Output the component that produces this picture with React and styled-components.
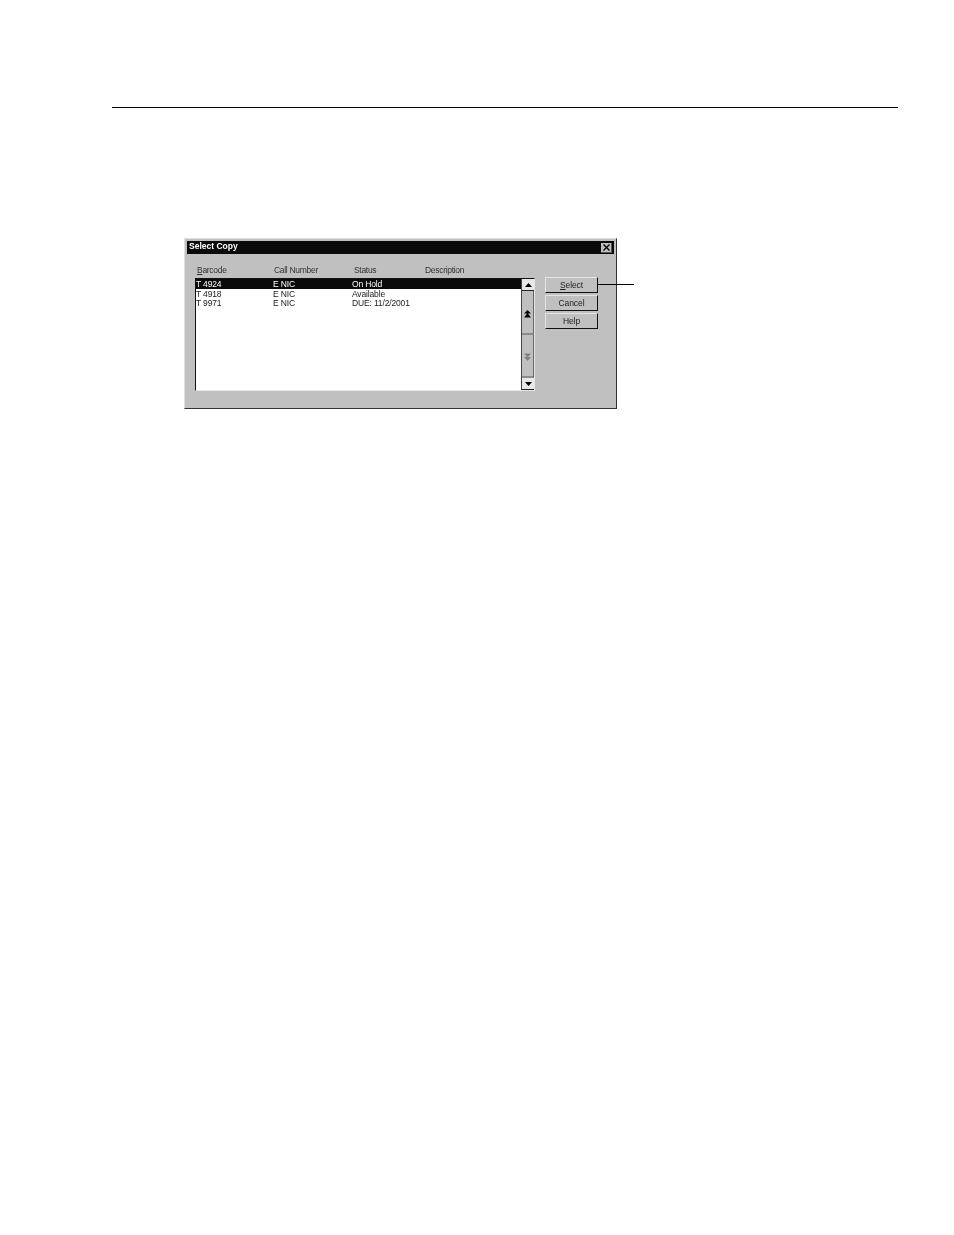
import React from 'react';
import styled, { createGlobalStyle } from 'styled-components';

const COLUMNS = ['Barcode', 'Call Number', 'Status', 'Description'];

const COPIES = [
  { barcode: 'T 4924', call: 'E NIC', status: 'On Hold' },
  { barcode: 'T 4918', call: 'E NIC', status: 'Available' },
  { barcode: 'T 9971', call: 'E NIC', status: 'DUE: 11/2/2001' },
];

const GlobalStyle = createGlobalStyle`
  html, body {
    margin: 0;
    padding: 0;
    background: #fff;
    font-family: 'Liberation Sans', Arial, sans-serif;
  }
`;

const ArrowUp = () => (
  <svg width="7" height="4" viewBox="0 0 7 4">
    <path d="M3.5 0 L7 4 L0 4 Z" fill="#000" />
  </svg>
);

const ArrowDown = () => (
  <svg width="7" height="4" viewBox="0 0 7 4">
    <path d="M0 0 L7 0 L3.5 4 Z" fill="#000" />
  </svg>
);

const DoubleUp = () => (
  <svg width="7" height="8" viewBox="0 0 7 8">
    <path d="M3.5 0 L7 3.5 L0 3.5 Z M3.5 3 L7 7.5 L0 7.5 Z" fill="#000" />
  </svg>
);

const DoubleDown = () => (
  <svg width="7" height="8" viewBox="0 0 7 8">
    <path d="M0 0.5 L7 0.5 L3.5 4.5 Z M0 4 L7 4 L3.5 8 Z" fill="#808080" />
  </svg>
);

const App = () => {
  return (
    <Page>
      <GlobalStyle />
      <Rule />
      <Figure>
        <Dialog>
          <TitleBar>
            <Title>Select Copy</Title>
            <CloseButton>
              <svg width="7" height="7" viewBox="0 0 7 7">
                <path d="M0.5 0.5 L6.5 6.5 M6.5 0.5 L0.5 6.5" stroke="#000" strokeWidth="1.4" />
              </svg>
            </CloseButton>
          </TitleBar>
          <Body>
            <ListArea>
              <HeaderRow>
                {COLUMNS.map((col) => (
                  <HeaderCell key={col}>
                    {col === 'Barcode' ? (
                      <>
                        <u>B</u>arcode
                      </>
                    ) : (
                      col
                    )}
                  </HeaderCell>
                ))}
              </HeaderRow>
              <ListBox>
                <Rows>
                  {COPIES.map((copy, i) => (
                    <Row key={copy.barcode} $selected={i === 0}>
                      <span>{copy.barcode}</span>
                      <span>{copy.call}</span>
                      <span>{copy.status}</span>
                    </Row>
                  ))}
                </Rows>
                <ScrollBar>
                  <ScrollEnd>
                    <ArrowUp />
                  </ScrollEnd>
                  <ScrollPage>
                    <DoubleUp />
                  </ScrollPage>
                  <ScrollPage>
                    <DoubleDown />
                  </ScrollPage>
                  <ScrollEnd>
                    <ArrowDown />
                  </ScrollEnd>
                </ScrollBar>
              </ListBox>
            </ListArea>
            <Buttons>
              <Button>
                <u>S</u>elect
              </Button>
              <Button>Cancel</Button>
              <Button>Help</Button>
            </Buttons>
          </Body>
        </Dialog>
        <Callout />
      </Figure>
    </Page>
  );
};

const Page = styled.div`
  width: 954px;
  height: 1235px;
  padding-top: 107px;
  box-sizing: border-box;
  overflow: hidden;
`;

const Rule = styled.div`
  width: 786px;
  height: 1px;
  margin-left: 112px;
  background: #000;
`;

const Figure = styled.div`
  position: relative;
  width: 450px;
  margin: 130px 0 0 184px;
`;

/* the screenshot is a greyscale scan, so no colour fringes on the small text */
const Dialog = styled.div`
  width: 433px;
  height: 171px;
  box-sizing: border-box;
  background: #c0c0c0;
  border: 1px solid;
  border-color: #dfdfdf #333 #333 #dfdfdf;
  padding: 2px;
  filter: grayscale(1);
`;

const TitleBar = styled.div`
  height: 13px;
  background: #0a0a0a;
  display: flex;
  align-items: center;
  justify-content: space-between;
  padding: 0 2px;
`;

const Title = styled.span`
  color: #fff;
  font-size: 8.5px;
  font-weight: 700;
  line-height: 11px;
  margin-bottom: 2px;
`;

const CloseButton = styled.span`
  width: 11px;
  height: 10px;
  display: flex;
  align-items: center;
  justify-content: center;
  background: #c0c0c0;
  border-right: 1px solid #555;
  border-bottom: 1px solid #555;
  box-sizing: border-box;
`;

const Body = styled.div`
  display: flex;
  gap: 10px;
  padding: 10px 0 0 8px;
`;

const ListArea = styled.div`
  width: 340px;
`;

const HeaderRow = styled.div`
  display: grid;
  grid-template-columns: 77px 80px 71px 1fr;
  height: 12px;
  margin-bottom: 2px;
  padding-left: 2px;
  align-items: center;
`;

const HeaderCell = styled.span`
  font-size: 8.5px;
  letter-spacing: -0.3px;
  color: #333;
`;

const ListBox = styled.div`
  height: 113px;
  box-sizing: border-box;
  display: flex;
  background: #fff;
  border: 1px solid;
  border-color: #111 #e6e6e6 #e6e6e6 #111;
`;

const Rows = styled.div`
  flex: 1;
  min-width: 0;
`;

const Row = styled.div`
  display: grid;
  grid-template-columns: 77px 79px 1fr;
  height: ${(p) => (p.$selected ? '10px' : '9px')};
  line-height: 9px;
  padding-top: ${(p) => (p.$selected ? '1px' : '0')};
  box-sizing: border-box;
  font-size: 8.5px;
  letter-spacing: -0.15px;
  color: ${(p) => (p.$selected ? '#fff' : '#222')};
  background: ${(p) => (p.$selected ? '#0a0a0a' : 'transparent')};
  & > span {
    position: relative;
    top: ${(p) => (p.$selected ? '0' : '1px')};
  }
`;

const ScrollBar = styled.div`
  width: 12px;
  display: flex;
  flex-direction: column;
  background: #c0c0c0;
  border-left: 1px solid #444;
`;

const ScrollEnd = styled.div`
  height: 12px;
  flex: none;
  box-sizing: border-box;
  display: flex;
  align-items: center;
  justify-content: center;
  background: #e8e8e8;
  border-bottom: 1px solid #222;
`;

const ScrollPage = styled.div`
  flex: 1;
  display: flex;
  align-items: center;
  justify-content: center;
  padding-top: 4px;
  border-bottom: 2px solid #8a8a8a;
  border-right: 1px solid #666;
`;

const Buttons = styled.div`
  display: flex;
  flex-direction: column;
  gap: 2px;
  margin-top: 13px;
`;

const Button = styled.div`
  width: 53px;
  height: 16px;
  box-sizing: border-box;
  display: flex;
  align-items: center;
  justify-content: center;
  font-size: 8.5px;
  letter-spacing: -0.1px;
  color: #222;
  white-space: pre;
  background: #c0c0c0;
  border: 1px solid;
  border-color: #e4e4e4 #111 #111 #e4e4e4;
`;

const Callout = styled.div`
  position: absolute;
  left: 414px;
  top: 46px;
  width: 36px;
  height: 1px;
  background: #000;
`;

export default App;
